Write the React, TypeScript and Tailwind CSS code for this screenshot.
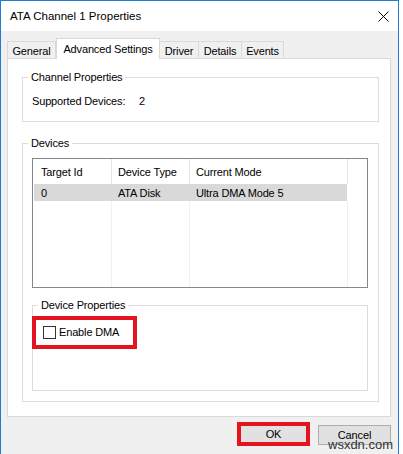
import React from "react";

const font = { fontFamily: '"Liberation Sans", Arial, sans-serif' };

const tabs = [
  { label: "General", w: "w-[49px]" },
  { label: "Advanced Settings", w: "w-[104px]", active: true },
  { label: "Driver", w: "w-[40px]" },
  { label: "Details", w: "w-[44px]" },
  { label: "Events", w: "w-[43px]" },
];

function CloseIcon() {
  return (
    <svg width="11" height="11" viewBox="0 0 11 11" className="block">
      <path d="M0.5 0.5 L10.5 10.5 M10.5 0.5 L0.5 10.5" stroke="#000" strokeWidth="1" fill="none" />
    </svg>
  );
}

export default function App() {
  return (
    <div
      className="w-[403px] h-[454px] bg-white overflow-hidden relative text-[11px] tracking-[-0.15px] text-black leading-4"
      style={font}
    >
      <div className="w-[399px] h-[454px] border border-b-0 border-[#1c7cd6] bg-[#f0f0f0] flex flex-col">
        {/* title bar */}
        <div className="h-[30px] bg-white flex items-center justify-between pl-[9px] pr-[9px] shrink-0">
          <span className="text-[11.5px] tracking-normal">ATA Channel 1 Properties</span>
          <CloseIcon />
        </div>

        {/* tabs */}
        <div className="h-[27px] flex items-end pl-[7px] shrink-0">
          {tabs.map((t) =>
            t.active ? (
              <div
                key={t.label}
                className={`${t.w} h-[21px] -mb-px bg-white border border-b-0 border-[#d9d9d9] flex items-center justify-center relative z-10`}
              >
                {t.label}
              </div>
            ) : (
              <div
                key={t.label}
                className={`${t.w} h-[17px] bg-[#f0f0f0] border border-b-0 border-[#d9d9d9] -ml-px flex items-center justify-center pt-px`}
              >
                {t.label}
              </div>
            )
          )}
        </div>

        {/* panel */}
        <div className="ml-[6px] w-[384px] h-[359px] bg-white border border-[#d9d9d9] flex flex-col shrink-0">
          {/* Channel Properties */}
          <fieldset className="ml-[14px] mt-[10px] w-[357px] h-[53px] border border-[#dcdcdc] p-0">
            <legend className="ml-[5px] px-[3px] leading-4">Channel Properties</legend>
            <div className="flex pl-[9px] mt-[8px]">
              <span className="w-[107px] shrink-0">Supported Devices:</span>
              <span>2</span>
            </div>
          </fieldset>

          {/* Devices */}
          <fieldset className="ml-[14px] mt-[13px] w-[357px] h-[267px] border border-[#dcdcdc] p-0 flex flex-col">
            <legend className="ml-[5px] px-[3px] leading-4">Devices</legend>

            <div className="ml-[9px] mt-[7px] w-[336px] h-[130px] border border-[#828790] bg-white flex flex-col">
              <div className="h-[25px] flex items-center shrink-0">
                <div className="w-[79px] h-full pl-[8px] border-r border-[#e5e5e5] flex items-center">Target Id</div>
                <div className="w-[78px] h-full pl-[6px] border-r border-[#e5e5e5] flex items-center">Device Type</div>
                <div className="w-[158px] h-full pl-[6px] border-r border-[#e5e5e5] flex items-center">Current Mode</div>
                <div className="flex-1" />
              </div>
              <div className="h-[17px] ml-px w-[313px] bg-[#d9d9d9] flex items-center shrink-0">
                <div className="w-[78px] pl-[7px]">0</div>
                <div className="w-[78px] pl-[6px]">ATA Disk</div>
                <div className="w-[157px] pl-[6px]">Ultra DMA Mode 5</div>
              </div>
              <div className="flex-1 flex">
                <div className="w-[79px] border-r border-[#edf1f5]" />
                <div className="w-[78px] border-r border-[#edf1f5]" />
                <div className="w-[158px] border-r border-[#edf1f5]" />
              </div>
            </div>

            {/* Device Properties */}
            <fieldset className="relative ml-[9px] mt-[9px] w-[336px] h-[94px] border border-[#dcdcdc] p-0">
              <legend className="ml-[5px] px-[3px] leading-4">Device Properties</legend>
              <label className="flex items-center mt-[12px] pl-[10px] h-[14px]">
                <span className="w-[13px] h-[13px] border border-[#333333] bg-white shrink-0" />
                <span className="ml-[3px]">Enable DMA</span>
              </label>
              <div className="absolute left-[-1px] top-[3px] w-[105px] h-[33px] border-4 border-[#e3141f] pointer-events-none" />
            </fieldset>
          </fieldset>
        </div>

        {/* buttons */}
        <div className="flex justify-end items-start pr-[7px] mt-[5px] gap-[8px]">
          <button className="w-[73px] h-[24px] border-4 border-[#e3141f] bg-[#e1e1e1] flex items-center justify-center">
            OK
          </button>
          <button className="mt-[3px] w-[73px] h-[20px] border border-[#adadad] bg-[#e1e1e1] flex items-center justify-center">
            Cancel
          </button>
        </div>
      </div>

      <span className="absolute left-[328px] top-[437px] text-[13px] tracking-normal leading-[15px] text-[#333333]">
        wsxdn.com
      </span>
    </div>
  );
}
